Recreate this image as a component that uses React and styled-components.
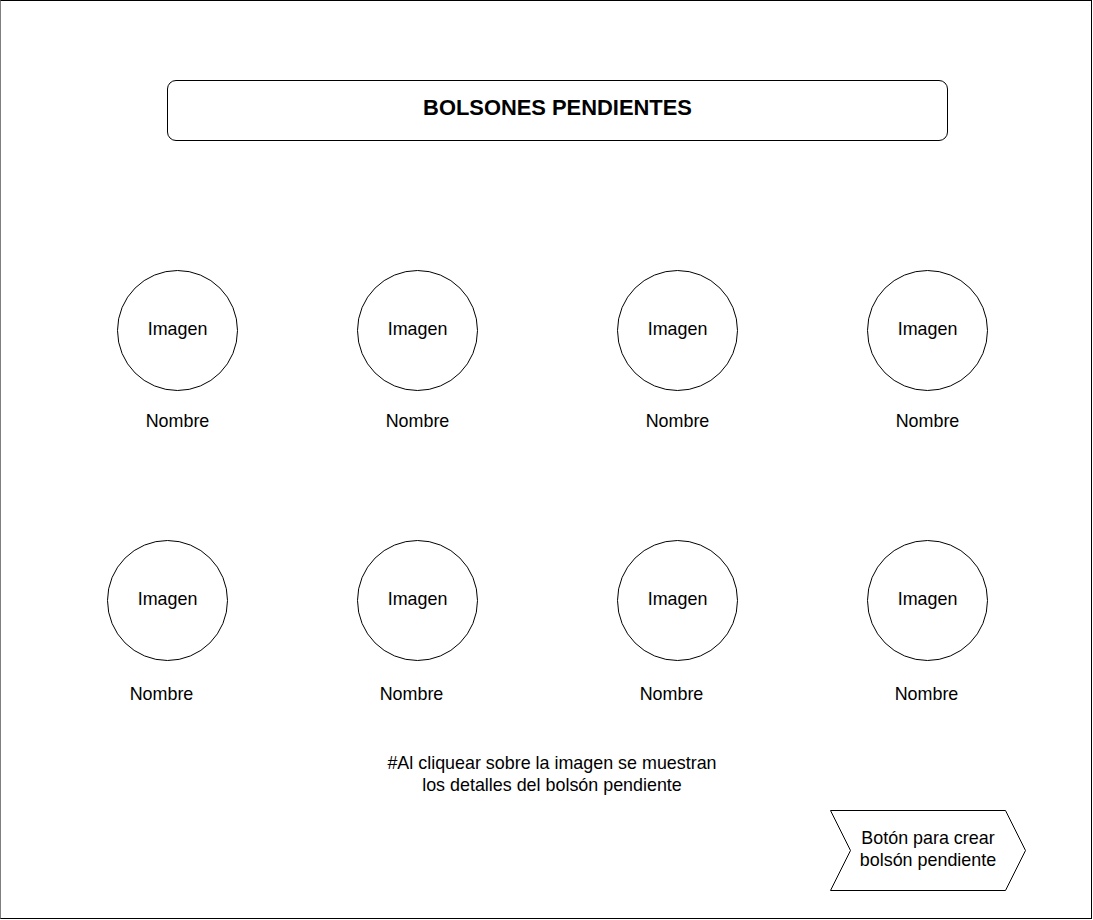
import styled, { createGlobalStyle } from "styled-components";

const GlobalStyle = createGlobalStyle`
  html, body {
    margin: 0;
    padding: 0;
    background: #fff;
  }
  body {
    font-family: "Liberation Sans", Arial, Helvetica, sans-serif;
    color: #000;
  }
`;

const Frame = styled.div`
  box-sizing: border-box;
  width: 1092px;
  height: 919px;
  border: 1px solid #000;
  border-left-color: #7f7f7f;
  display: flex;
  flex-direction: column;
`;

const TitleBox = styled.div`
  box-sizing: border-box;
  width: 781px;
  height: 61px;
  margin: 79px 0 0 166px;
  border: 1px solid #000;
  border-radius: 9px;
  display: flex;
  align-items: center;
  justify-content: center;
  padding-bottom: 5px;
  font-size: 21.9px;
  font-weight: bold;
`;

const Row = styled.div`
  display: flex;
  margin-top: ${p => p.$top}px;
  padding-left: ${p => p.$left}px;
`;

const Cell = styled.div`
  width: 121px;
  display: flex;
  flex-direction: column;
  margin-left: ${p => p.$gap || 0}px;
`;

const Circle = styled.div`
  box-sizing: border-box;
  width: 121px;
  height: 121px;
  border: 1px solid #000;
  border-radius: 50%;
  display: flex;
  align-items: center;
  justify-content: center;
  padding-bottom: 2px;
  font-size: 17.9px;
`;

const Name = styled.div`
  width: 121px;
  margin-top: ${p => p.$top}px;
  margin-left: ${p => p.$shift || 0}px;
  text-align: center;
  font-size: 17.9px;
  line-height: 22px;
`;

const Note = styled.div`
  margin: 47px 0 0 12px;
  text-align: center;
  font-size: 17.9px;
  line-height: 22px;
`;

const ButtonRow = styled.div`
  display: flex;
  justify-content: flex-end;
  padding-right: 65px;
  margin-top: 14px;
`;

const StepButton = styled.div`
  position: relative;
  width: 196px;
  height: 81px;
  display: flex;
  align-items: center;
  justify-content: center;
  padding-bottom: 3px;
  box-sizing: border-box;
  text-align: center;
  font-size: 17.9px;
  line-height: 22px;
  cursor: pointer;

  svg {
    position: absolute;
    inset: 0;
  }
  span {
    position: relative;
  }
`;

const rows = [
  {
    top: 129,
    left: 116,
    nameTop: 19,
    cells: [
      { gap: 0, shift: 0 },
      { gap: 119, shift: 0 },
      { gap: 139, shift: 0 },
      { gap: 129, shift: 0 },
    ],
  },
  {
    top: 108,
    left: 106,
    nameTop: 22,
    cells: [
      { gap: 0, shift: -6 },
      { gap: 129, shift: -6 },
      { gap: 139, shift: -6 },
      { gap: 129, shift: -1 },
    ],
  },
];

export default function App() {
  return (
    <>
      <GlobalStyle />
      <Frame>
        <TitleBox>BOLSONES PENDIENTES</TitleBox>
        {rows.map((row, i) => (
          <Row key={i} $top={row.top} $left={row.left}>
            {row.cells.map((c, j) => (
              <Cell key={j} $gap={c.gap}>
                <Circle>Imagen</Circle>
                <Name $top={row.nameTop} $shift={c.shift}>
                  Nombre
                </Name>
              </Cell>
            ))}
          </Row>
        ))}
        <Note>
          #Al cliquear sobre la imagen se muestran
          <br />
          los detalles del bolsón pendiente
        </Note>
        <ButtonRow>
          <StepButton>
            <svg width="196" height="81" viewBox="0 0 196 81">
              <polygon
                points="0.5,0.5 175.5,0.5 195.5,40.5 175.5,80.5 0.5,80.5 20.5,40.5"
                fill="#fff"
                stroke="#000"
                strokeWidth="1"
              />
            </svg>
            <span>
              Botón para crear
              <br />
              bolsón pendiente
            </span>
          </StepButton>
        </ButtonRow>
      </Frame>
    </>
  );
}
